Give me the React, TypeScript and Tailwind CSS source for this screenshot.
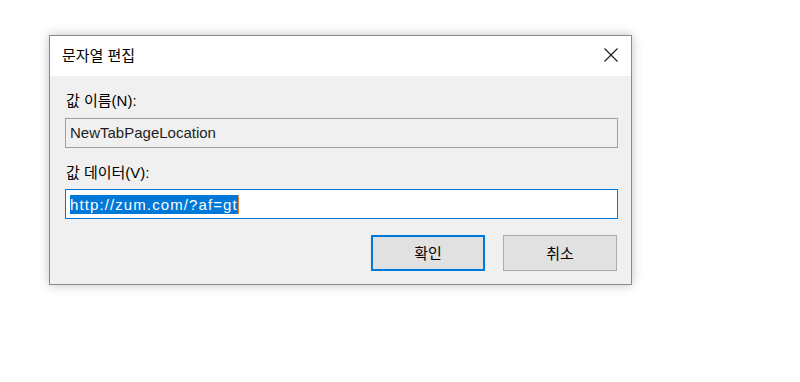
const font = { fontFamily: '"Liberation Sans", "Noto Sans CJK KR", sans-serif' };

export default function App() {
  return (
    <div
      className="w-[800px] h-[382px] bg-white pl-[49px] pt-[35px] text-[15px] text-black"
      style={font}
    >
      <div className="w-[583px] h-[250px] border border-[#8a8a8a] bg-[#f0f0f0] shadow-[0_0_10px_rgba(0,0,0,0.25)] flex flex-col">
        <div className="h-[40px] bg-white flex items-center justify-between pl-[12px] pr-[13px]">
          <span className="leading-[18px]">문자열 편집</span>
          <svg width="14" height="14" viewBox="0 0 14 14" className="mt-[-2px]">
            <path d="M0.5 0.5 L13.5 13.5 M13.5 0.5 L0.5 13.5" stroke="#1a1a1a" strokeWidth="1.1" fill="none" />
          </svg>
        </div>
        <div className="flex flex-col pl-[15px] pr-[13px] pt-[16px]">
          <label className="leading-[18px] pl-[1px]">값 이름(N):</label>
          <div className="mt-[8px] h-[30px] border border-[#a0a0a0] bg-[#f0f0f0] flex items-center pl-[4px] text-[#1e1e1e]">
            NewTabPageLocation
          </div>
          <label className="mt-[16px] leading-[18px] pl-[1px]">값 데이터(V):</label>
          <div className="mt-[7px] h-[30px] border border-[#0078d7] bg-white flex items-center pl-[4px]">
            <span className="bg-[#0078d7] text-white leading-[19px] tracking-[1.1px]">http://zum.com/?af=gt</span>
            <span className="w-[1px] h-[19px] bg-[#e0813a]" />
          </div>
          <div className="mt-[16px] flex justify-end gap-[18px] pr-[1px]">
            <button className="w-[114px] h-[36px] border-2 border-[#0078d7] bg-[#e1e1e1] leading-none">확인</button>
            <button className="w-[114px] h-[36px] border border-[#adadad] bg-[#e1e1e1] leading-none">취소</button>
          </div>
        </div>
      </div>
    </div>
  );
}
